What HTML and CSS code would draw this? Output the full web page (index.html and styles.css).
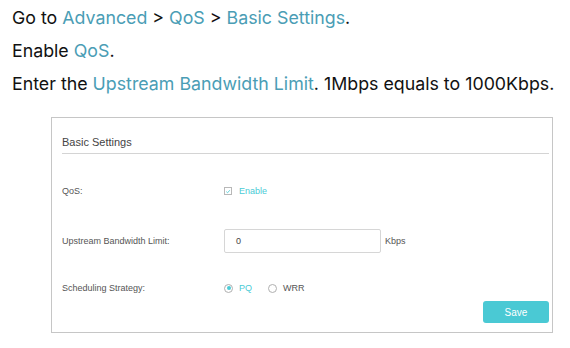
FILE: index.html
```html
<!DOCTYPE html>
<html lang="en">
<head>
    <meta charset="UTF-8">
    <title>QoS Basic Settings</title>
    <link rel="stylesheet" href="styles.css">
</head>
<body>

<!-- Steps -->
<div class="steps">
    <p>Go to <span class="hl">Advanced</span> &gt; <span class="hl">QoS</span> &gt; <span class="hl">Basic Settings</span>.</p>
    <p>Enable <span class="hl">QoS</span>.</p>
    <p>Enter the <span class="hl">Upstream Bandwidth Limit</span>. 1Mbps equals to 1000Kbps.</p>
</div>

<!-- Screenshot panel -->
<div class="panel">
    <div class="panel-title">Basic Settings</div>

    <div class="row row-qos">
        <div class="label">QoS:</div>
        <div class="control">
            <span class="check">
                <svg width="7" height="7" viewBox="0 0 7 7"><path d="M1.5 3.6 L3 5 L5.6 2" fill="none" stroke="#4acbd6" stroke-width="1"/></svg>
            </span>
            <span class="accent">Enable</span>
        </div>
    </div>

    <div class="row row-limit">
        <div class="label">Upstream Bandwidth Limit:</div>
        <div class="control">
            <div class="input">0</div>
            <span class="unit">Kbps</span>
        </div>
    </div>

    <div class="row row-sched">
        <div class="label">Scheduling Strategy:</div>
        <div class="control">
            <span class="radio on"></span><span class="accent">PQ</span>
            <span class="radio"></span><span>WRR</span>
        </div>
    </div>

    <div class="actions">
        <button class="save">Save</button>
    </div>
</div>

</body>
</html>
```

FILE: styles.css
```css
* {
    margin: 0;
    padding: 0;
    box-sizing: border-box;
}

body {
    background: #fff;
    font-family: Inter, "Liberation Sans", sans-serif;
    color: #111;
}

.steps {
    padding: 1px 0 0 12px;
}

.steps p {
    font-size: 17.8px;
    line-height: 33px;
}

.hl {
    color: #4a9db5;
}

/* Panel */
.panel {
    margin: 17px 0 0 51px;
    width: 502px;
    height: 216px;
    border: 1px solid #c6c6c6;
    padding: 0 3px 0 10px;
    font-family: "Liberation Sans", Arial, sans-serif;
    color: #555;
}

.panel-title {
    font-size: 11px;
    color: #444;
    padding-top: 18px;
    padding-bottom: 5px;
    border-bottom: 1px solid #d4d4d4;
}

.row {
    display: grid;
    grid-template-columns: 162px 1fr;
    align-items: center;
    font-size: 9px;
}

.row-qos {
    margin-top: 29px;
    height: 16px;
}

.row-limit {
    margin-top: 30px;
    height: 24px;
}

.row-sched {
    margin-top: 27px;
    height: 16px;
}

.label {
    color: #555;
}

.control {
    display: flex;
    align-items: center;
}

.accent {
    color: #4acbd6;
}

.check {
    width: 8px;
    height: 8px;
    border: 1px solid #b8b8b8;
    display: flex;
    align-items: center;
    justify-content: center;
    margin-right: 7px;
}

.check svg {
    display: block;
}

.input {
    width: 157px;
    height: 24px;
    border: 1px solid #d6d6d6;
    border-radius: 2px;
    padding-left: 11px;
    line-height: 22px;
    font-size: 9px;
    color: #444;
}

.unit {
    margin-left: 4px;
    color: #555;
}

.radio {
    width: 9px;
    height: 9px;
    border: 1px solid #b0b0b0;
    border-radius: 50%;
    margin-right: 6px;
    position: relative;
}

.radio.on::after {
    content: "";
    position: absolute;
    left: 1.5px;
    top: 1.5px;
    width: 4px;
    height: 4px;
    border-radius: 50%;
    background: #4acbd6;
}

.accent + .radio {
    margin-left: 16px;
}

.actions {
    display: flex;
    justify-content: flex-end;
    margin-top: 5px;
}

.save {
    width: 66px;
    height: 22px;
    border: none;
    border-radius: 3px;
    background: #4ac9d4;
    color: #fff;
    font-family: "Liberation Sans", Arial, sans-serif;
    font-size: 10px;
}
```
